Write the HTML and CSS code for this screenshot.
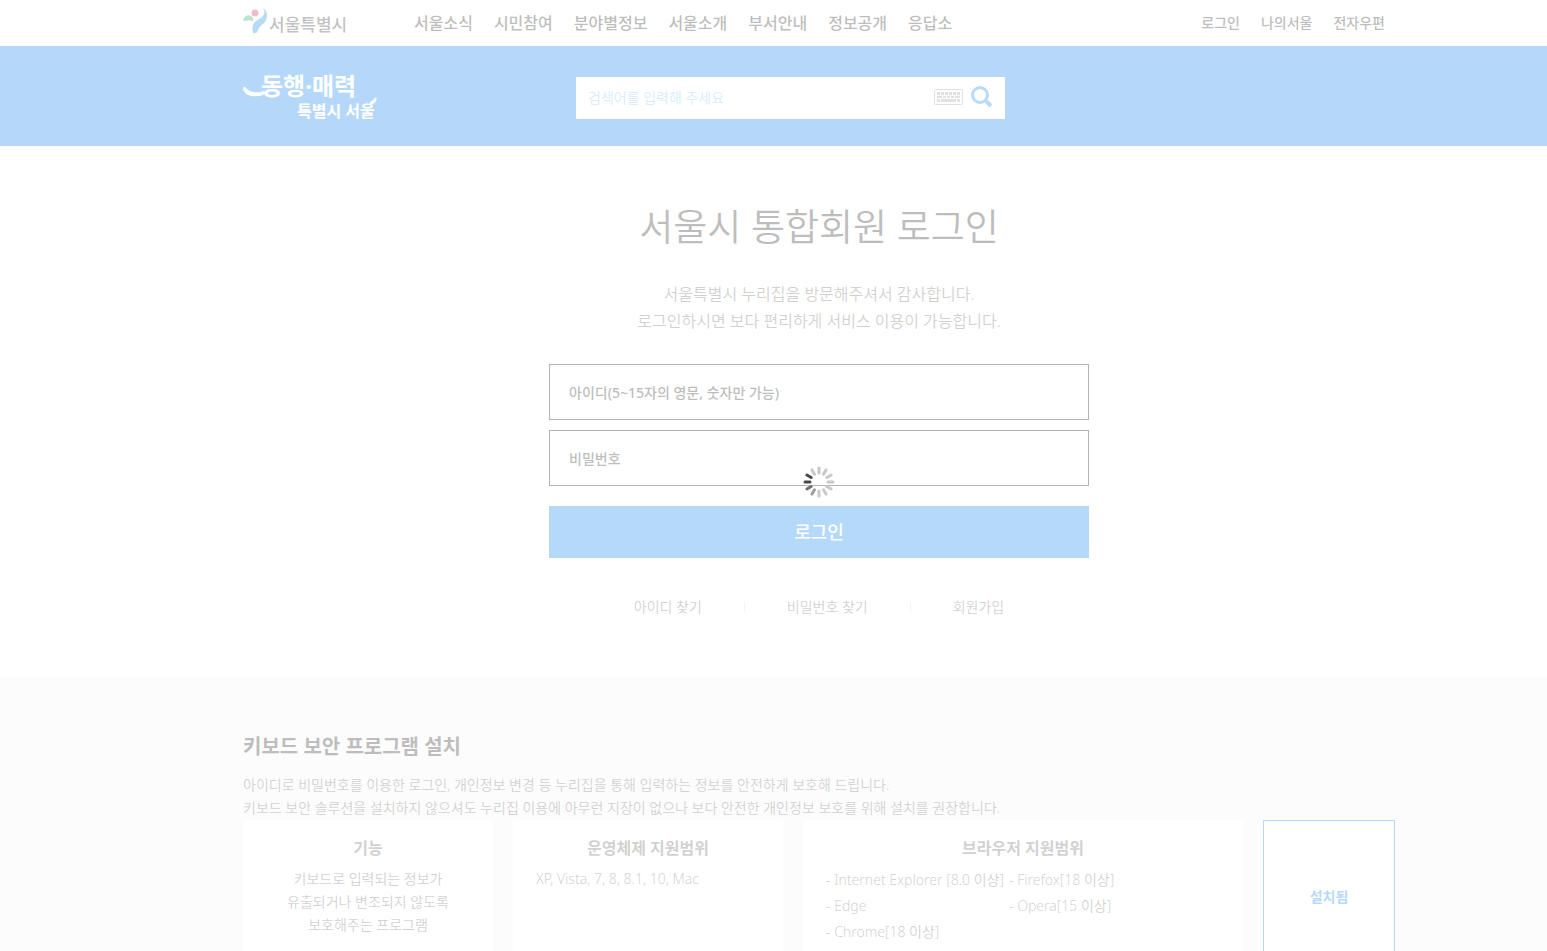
FILE: index.html
```html
<!DOCTYPE html>
<html lang="ko">
<head>
  <meta charset="UTF-8">
  <meta name="viewport" content="width=device-width, initial-scale=1.0">
  <title>서울시 통합회원 로그인</title>
  <link rel="stylesheet" href="styles.css">
</head>
<body class="loading">

  <header class="top">
    <div class="inner top-inner">
      <a href="#" class="logo">
        <svg width="26" height="26" viewBox="0 0 26 26" aria-hidden="true">
          <path d="M0 13C1 7 7 5 10 10C11 12 10 14 9 13C6 12 3 13 0 13Z" fill="#23a455"/>
          <circle cx="12" cy="5" r="3.5" fill="#d1214f"/>
          <path d="M20 0C25 3 25 9 22 14C18 18 16 19 15 22C15 24 13 26 10 25C8 18 11 13 16 11C21 9 23 4 20 0Z" fill="#0a88dc"/>
        </svg>
        <span>서울특별시</span>
      </a>
      <nav class="gnb">
        <a href="#">서울소식</a>
        <a href="#">시민참여</a>
        <a href="#">분야별정보</a>
        <a href="#">서울소개</a>
        <a href="#">부서안내</a>
        <a href="#">정보공개</a>
        <a href="#">응답소</a>
      </nav>
      <nav class="util">
        <a href="#">로그인</a>
        <a href="#">나의서울</a>
        <a href="#">전자우편</a>
      </nav>
    </div>
  </header>

  <div class="band">
    <div class="inner band-inner">
      <a href="#" class="slogan">
        <svg width="136" height="56" viewBox="0 0 136 56" role="img" aria-label="동행·매력 특별시 서울">
          <path d="M0 21C0 18 3 19 4 21C8 25 14 25 21 23C23 24 22 26 20 27C11 30 2 28 0 21Z" class="brush"/>
          <path d="M127 34C129 33 131 31 133 29C135 33 131 36 127 37Z" class="brush"/>
          <text x="18" y="27" class="slogan-big">동행·매력</text>
          <text x="54" y="49" class="slogan-small">특별시 서울</text>
        </svg>
      </a>
      <form class="search">
        <label for="query">검색어를 입력해 주세요</label>
        <input type="text" id="query">
        <button type="button" title="키보드">
          <svg width="29" height="16" viewBox="0 0 29 16">
            <rect x="0.5" y="0.5" width="28" height="15" rx="1" fill="none" stroke="#999"/>
            <path d="M3 4.5H26" stroke="#999" stroke-width="3" stroke-dasharray="3 1"/>
            <path d="M3 8H8M9 8H12M13 8H16M17 8H20M21 8H26" stroke="#999" stroke-width="2"/>
            <path d="M3 11.5H6M7 11.5H22M23 11.5H26" stroke="#999" stroke-width="3"/>
          </svg>
        </button>
        <button type="submit" title="검색">
          <svg width="22" height="22" viewBox="0 0 22 22">
            <circle cx="9" cy="9" r="7.5" fill="none" stroke="#1585e0" stroke-width="3"/>
            <path d="M14 14L20 20" stroke="#1585e0" stroke-width="4"/>
          </svg>
        </button>
      </form>
    </div>
  </div>

  <main class="member">
    <h1>서울시 통합회원 로그인</h1>
    <p class="intro">서울특별시 누리집을 방문해주셔서 감사합니다.<br>로그인하시면 보다 편리하게 서비스 이용이 가능합니다.</p>
    <form class="login">
      <div class="field">
        <label for="userId">아이디(5~15자의 영문, 숫자만 가능)</label>
        <input type="text" id="userId">
      </div>
      <div class="field">
        <label for="userPw">비밀번호</label>
        <input type="password" id="userPw">
      </div>
      <button type="submit">로그인</button>
    </form>
    <div class="find">
      <a href="#">아이디 찾기</a>
      <a href="#">비밀번호 찾기</a>
      <a href="#">회원가입</a>
    </div>
  </main>

  <section class="security">
    <div class="inner">
      <h2>키보드 보안 프로그램 설치</h2>
      <p>아이디로 비밀번호를 이용한 로그인, 개인정보 변경 등 누리집을 통해 입력하는 정보를 안전하게 보호해 드립니다.<br>키보드 보안 솔루션을 설치하지 않으셔도 누리집 이용에 아무런 지장이 없으나 보다 안전한 개인정보 보호를 위해 설치를 권장합니다.</p>
      <div class="cards">
        <div class="card">
          <h3>기능</h3>
          <p class="center">키보드로 입력되는 정보가<br>유출되거나 변조되지 않도록<br>보호해주는 프로그램</p>
        </div>
        <div class="card">
          <h3>운영체제 지원범위</h3>
          <p>XP, Vista, 7, 8, 8.1, 10, Mac</p>
        </div>
        <div class="card">
          <h3>브라우저 지원범위</h3>
          <ul class="browsers">
            <li>- Internet Explorer [8.0 이상]</li>
            <li>- Firefox[18 이상]</li>
            <li>- Edge</li>
            <li>- Opera[15 이상]</li>
            <li>- Chrome[18 이상]</li>
          </ul>
        </div>
        <button type="button" class="installed">설치됨</button>
      </div>
    </div>
  </section>

  <!-- 로딩 화면 -->
  <div class="overlay">
    <svg class="spinner" width="32" height="32" viewBox="-16 -16 32 32" stroke-width="3" stroke-linecap="round" stroke="#c8c8c8">
      <path d="M0 -9V-14"/>
      <path d="M0 -9V-14" transform="rotate(30)"/>
      <path d="M0 -9V-14" transform="rotate(60)"/>
      <path d="M0 -9V-14" transform="rotate(90)"/>
      <path d="M0 -9V-14" transform="rotate(120)"/>
      <path d="M0 -9V-14" transform="rotate(150)"/>
      <path d="M0 -9V-14" transform="rotate(180)"/>
      <path d="M0 -9V-14" transform="rotate(210)" stroke="#a0a0a0"/>
      <path d="M0 -9V-14" transform="rotate(240)" stroke="#707070"/>
      <path d="M0 -9V-14" transform="rotate(270)" stroke="#484848"/>
      <path d="M0 -9V-14" transform="rotate(300)" stroke="#484848"/>
      <path d="M0 -9V-14" transform="rotate(330)"/>
    </svg>
  </div>

</body>
</html>
```
FILE: styles.css
```css
* {
  box-sizing: border-box;
}
body {
  margin: 0;
  background-color: white;
  color: #666;
  font-family: "Noto Sans", "Noto Sans CJK KR", sans-serif;
  font-size: 14px;
  font-weight: 350;
}
body.loading {
  height: 100vh;
  overflow: hidden;
}
h1, h2, h3, p, ul {
  margin: 0;
  padding: 0;
}
a {
  color: inherit;
  text-decoration: none;
}
input, button {
  font-family: inherit;
  border: 0;
  border-radius: 0;
  padding: 0;
}
input {
  flex: 1;
  min-width: 0;
  height: 40px;
  background: none;
  font-size: 14px;
  outline: none;
}
button {
  cursor: pointer;
}
.top, .band, .member, .security {
  padding-left: 91px;
}
.inner {
  max-width: 1152px;
  margin: 0 auto;
}

/* 상단 메뉴 */
.top-inner {
  display: flex;
  align-items: center;
  height: 46px;
  padding-right: 10px;
  padding-bottom: 2px;
  color: #222;
  font-weight: 500;
}
.logo {
  display: flex;
  width: 171px;
  height: 28px;
  color: #333;
  font-size: 17px;
  line-height: 34px;
}
.gnb {
  display: flex;
  gap: 21px;
  font-size: 16px;
}
.util {
  display: flex;
  gap: 21px;
  margin-left: auto;
}

/* 검색 영역 */
.band {
  background-color: #087eee;
}
.band-inner {
  display: flex;
  align-items: center;
  height: 100px;
}
.slogan {
  width: 333px;
  height: 56px;
}
.slogan text, .brush {
  fill: white;
}
.slogan-big {
  font-size: 24px;
  font-weight: 700;
}
.slogan-small {
  font-size: 16px;
  font-weight: 700;
}
.search {
  display: flex;
  align-items: center;
  gap: 8px;
  width: 429px;
  height: 42px;
  padding: 0 12px 2px;
  margin-top: 4px;
  background-color: white;
}
.search label {
  color: #78b8fa;
}
.search button {
  display: flex;
  background: none;
}

/* 로그인 */
.member {
  display: flex;
  flex-direction: column;
  align-items: center;
  padding-top: 53px;
  padding-bottom: 58px;
}
.member h1 {
  color: #222;
  font-size: 37px;
  font-weight: 350;
  line-height: 56px;
}
.intro {
  margin-top: 26px;
  font-size: 16px;
  line-height: 27px;
  text-align: center;
}
.login {
  display: flex;
  flex-direction: column;
  gap: 10px;
  width: 540px;
  margin-top: 29px;
}
.field {
  display: flex;
  align-items: center;
  height: 56px;
  padding: 0 19px;
  border: 1px solid #000;
  color: #222;
  font-weight: 500;
}
.login button {
  height: 52px;
  margin-top: 10px;
  padding-bottom: 2px;
  background-color: #0880e8;
  color: white;
  font-size: 18px;
  font-weight: 500;
}
.find {
  display: flex;
  margin-top: 37px;
  margin-bottom: 1px;
  line-height: 23px;
}
.find a {
  display: flex;
  align-items: center;
}
.find a + a::before {
  content: "";
  width: 1px;
  height: 10px;
  margin: 0 42px;
  background-color: #ddd;
}

/* 키보드 보안 */
.security {
  padding-top: 55px;
  padding-bottom: 60px;
  background-color: #f5f5f5;
  line-height: 23px;
}
.security h2 {
  margin-bottom: 11px;
  color: #222;
  font-size: 20px;
  font-weight: 700;
  line-height: 30px;
}
.cards {
  display: grid;
  grid-template-columns: 250fr 270fr 440fr 132fr;
  gap: 20px;
  margin-top: 1px;
}
.card {
  min-height: 154px;
  padding: 16px 23px;
  background-color: white;
}
.card h3 {
  margin-bottom: 7px;
  font-size: 16px;
  font-weight: 700;
  line-height: 24px;
  text-align: center;
}
.card .center {
  text-align: center;
}
.browsers {
  display: grid;
  grid-template-columns: 183px 1fr;
  line-height: 26px;
  list-style: none;
}
.browsers li {
  white-space: nowrap;
}
.installed {
  padding-bottom: 2px;
  border: 1px solid #0880e8;
  background-color: white;
  color: #0880e8;
  font-size: 14px;
  font-weight: 700;
}

/* 로딩 */
.overlay {
  position: fixed;
  top: 0;
  left: 0;
  width: 100%;
  height: 100%;
  display: flex;
  justify-content: center;
  align-items: center;
  padding-left: 91px;
  background-color: rgba(255, 255, 255, 0.7);
}
.spinner {
  margin-top: 12px;
}
```
